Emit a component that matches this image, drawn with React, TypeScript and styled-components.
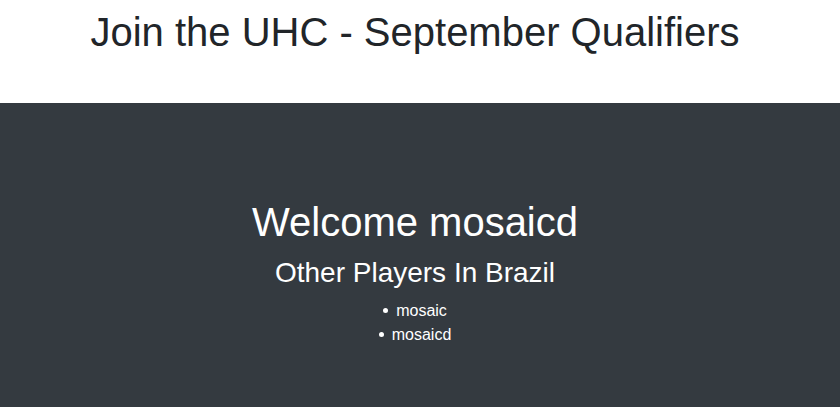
import React from "react";
import styled, { createGlobalStyle } from "styled-components";

const GlobalStyle = createGlobalStyle`
  html, body {
    margin: 0;
    padding: 0;
    overflow: hidden;
    background: #ffffff;
    font-family: "Liberation Sans", Arial, sans-serif;
  }
`;

const Header = styled.header`
  height: 103px;
  box-sizing: border-box;
  padding: 8px 10px 0 0;
  text-align: center;
`;

const Title = styled.h1`
  margin: 0 0 8px;
  font-size: 40px;
  font-weight: 500;
  line-height: 1.2;
  color: #212529;
`;

const DarkSection = styled.section`
  background: #343a40;
  color: #ffffff;
  height: 304px;
  box-sizing: border-box;
  padding: 95px 10px 0 0;
  text-align: center;
`;

const Welcome = styled.h1`
  margin: 0 0 10px;
  font-size: 40px;
  font-weight: 500;
  line-height: 1.2;
`;

const Subtitle = styled.h3`
  margin: 0 0 9px;
  font-size: 28px;
  font-weight: 500;
  line-height: 1.2;
`;

const PlayerList = styled.ul`
  margin: 0;
  padding: 0;
  list-style: none;
  font-size: 16px;
  line-height: 1.5;
`;

const Player = styled.li`
  &::before {
    content: "";
    display: inline-block;
    width: 5px;
    height: 5px;
    border-radius: 50%;
    background: #ffffff;
    margin-right: 8px;
    vertical-align: 3px;
  }
`;

const players = ["mosaic", "mosaicd"];

export default function App() {
  return (
    <>
      <GlobalStyle />
      <Header>
        <Title>Join the UHC - September Qualifiers</Title>
      </Header>
      <DarkSection>
        <Welcome>Welcome mosaicd</Welcome>
        <Subtitle>Other Players In Brazil</Subtitle>
        <PlayerList>
          {players.map((p) => (
            <Player key={p}>{p}</Player>
          ))}
        </PlayerList>
      </DarkSection>
    </>
  );
}
